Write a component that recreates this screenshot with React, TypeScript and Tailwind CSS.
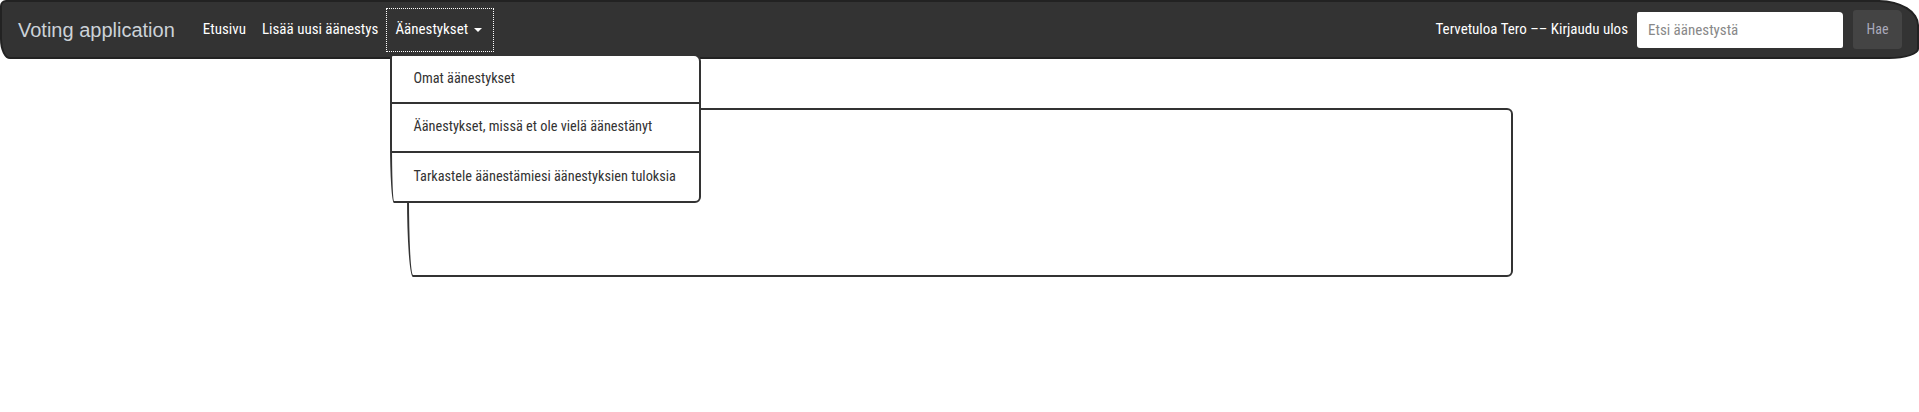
import { useState } from "react"

const condensed = "font-['Roboto_Condensed','Liberation_Sans',sans-serif]"

const menuItems = [
  { label: "Omat äänestykset", cls: "h-[46px]" },
  { label: "Äänestykset, missä et ole vielä äänestänyt", cls: "h-[49px] border-t-2 border-[#333]" },
  { label: "Tarkastele äänestämiesi äänestyksien tuloksia", cls: "h-[50px] border-t-2 border-[#333]" },
]

export default function App() {
  const [query, setQuery] = useState("")

  return (
    <div className="min-h-[412px] bg-white">
      {/* Navbar */}
      <nav
        className={`flex h-[59px] items-center border-2 border-[#222] bg-[#333] pl-4 pr-[15px] rounded-[6px_40px_30px_10px/6px_25px_10px_20px] ${condensed}`}
      >
        <a className="mr-[20px] font-['Liberation_Sans',sans-serif] text-[20px] text-[#ccd2d8]" href="#">
          Voting application
        </a>
        <a className="px-2 text-[15px] text-white" href="#">
          Etusivu
        </a>
        <a className="px-2 text-[15px] text-white" href="#">
          Lisää uusi äänestys
        </a>
        <div className="relative ml-[1px]">
          <button className="flex h-[42px] w-[106px] items-center gap-[6px] px-2 text-[15px] text-white outline-1 outline-dotted outline-white">
            Äänestykset
            <span className="h-0 w-0 border-l-[4px] border-r-[4px] border-t-[4px] border-l-transparent border-r-transparent border-t-white" />
          </button>
          {/* Dropdown menu */}
          <div className="absolute left-[3px] top-[45px] z-10 w-[311px] overflow-hidden border-2 border-[#333] bg-white rounded-[3px_7px_6px_4px/3px_7px_6px_60px]">
            {menuItems.map((item) => (
              <a
                key={item.label}
                href="#"
                className={`flex items-center whitespace-nowrap px-[21px] text-[14.3px] text-[#333] ${item.cls}`}
              >
                {item.label}
              </a>
            ))}
          </div>
        </div>

        <div className="ml-auto flex items-center">
          <span className="text-[15px] text-white">Tervetuloa Tero –– Kirjaudu ulos</span>
          <input
            value={query}
            onChange={(e) => setQuery(e.target.value)}
            placeholder="Etsi äänestystä"
            className="ml-[9px] h-[36px] w-[206px] rounded-[2px_4px_2px_3px] bg-white px-[11px] text-[15px] text-[#333] placeholder:text-[#888] outline-none"
          />
          <button className="ml-[10px] h-[39px] w-[49px] rounded-[3px_5px_4px_3px] bg-[#444] text-[14px] text-[#aab]">
            Hae
          </button>
        </div>
      </nav>

      {/* Main card */}
      <div className="mx-auto mt-[49px] h-[169px] w-[1106px] border-2 border-[#333] rounded-[3px_6px_6px_6px/3px_6px_6px_80px]" />
    </div>
  )
}
